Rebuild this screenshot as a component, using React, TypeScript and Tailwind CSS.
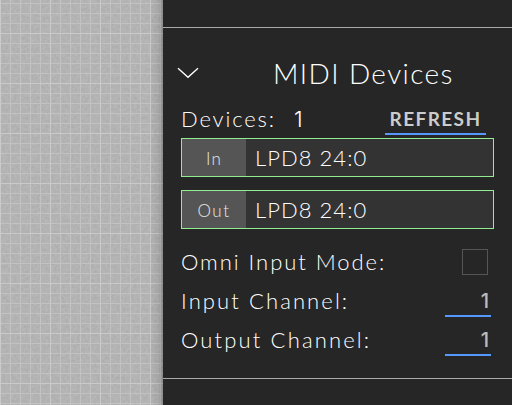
import type { ReactNode } from 'react';

function Canvas() {
  return (
    <div className="relative h-full w-[163px] shrink-0 bg-[#b7b7b7]">
      <svg className="block h-full w-full" width="163" height="405">
        <defs>
          <filter id="grain" x="0" y="0" width="100%" height="100%" colorInterpolationFilters="sRGB">
            <feTurbulence type="fractalNoise" baseFrequency="0.35" numOctaves="2" />
            <feColorMatrix values="0 0 0 0 0  0 0 0 0 0  0 0 0 0 0  0.1 0 0 0 -0.03" />
          </filter>
          <pattern id="minor" width="10" height="10" y="3" patternUnits="userSpaceOnUse">
            <path d="M0 0H10V1H1V10H0Z" fill="#c2c2c2" />
          </pattern>
          <pattern id="major" width="50" height="50" y="33" patternUnits="userSpaceOnUse">
            <path d="M0 0H50V1H1V50H0Z" fill="#cacaca" />
          </pattern>
          <linearGradient id="edge">
            <stop offset="0" stopColor="#000" stopOpacity="0" />
            <stop offset="0.7" stopColor="#000" stopOpacity="0.08" />
            <stop offset="1" stopColor="#000" stopOpacity="0.24" />
          </linearGradient>
        </defs>
        <rect width="163" height="405" filter="url(#grain)" />
        <rect width="163" height="405" fill="url(#minor)" />
        <rect width="163" height="405" fill="url(#major)" />
        <rect x="149" width="14" height="405" fill="url(#edge)" />
      </svg>
    </div>
  );
}

function Device({ label, tracking, children }: { label: string; tracking: string; children: ReactNode }) {
  return (
    <div className="flex h-[39px] w-[313px] border border-[#90ee90] bg-[#333]">
      <div className={`flex w-16 items-center justify-center bg-[#555] pt-[3px] text-[17px] text-[#e8e8e8] ${tracking}`}>{label}</div>
      <div className="flex items-center pl-[9px] text-[22px] tracking-[1.05px]">{children}</div>
    </div>
  );
}

function Channel({ label, tracking }: { label: string; tracking: string }) {
  return (
    <div className="flex h-[39px] w-[310px] justify-between">
      <span className={`leading-[38px] ${tracking}`}>{label}</span>
      <span className="mt-1 h-[31px] w-[46px] border-b-2 border-[#5599ff] pr-[2px] text-right font-['Inter',sans-serif] text-[20px] leading-[30px] font-medium text-[#bbb]">1</span>
    </div>
  );
}

export default function App() {
  return (
    <div className="flex h-[405px] w-[512px] overflow-hidden bg-[#262626]">
      <Canvas />
      <main className="flex flex-1 flex-col font-['Lato',sans-serif] text-[22px] font-light whitespace-nowrap text-white">
        <div className="h-7 shrink-0 border-b border-[#aaa]" />
        <section className="h-[351px] shrink-0 border-b border-[#aaa] pl-[18px]">
          <header className="flex h-[73px] items-center pt-4">
            <svg className="mt-px -ml-1 h-3 w-[22px]" viewBox="0 0 22 12" fill="none" stroke="#fff" strokeWidth="1.4">
              <path d="M1 1.2L11 10.2L21 1.2" />
            </svg>
            <h2 className="ml-[74px] text-[28px] leading-9 tracking-[1.4px]">MIDI Devices</h2>
          </header>
          <div className="flex h-[37px] w-[305px] justify-between">
            <div className="flex leading-[36px]">
              <span className="w-[113px] tracking-[1.85px]">Devices:</span>
              <span className="font-['Inter',sans-serif] font-light">1</span>
            </div>
            <button className="mt-1 h-[30px] w-[101px] border-b-2 border-[#5599ff] text-[19px] leading-[28px] font-bold tracking-[1.4px] text-[#ccc]">REFRESH</button>
          </div>
          <div className="flex flex-col gap-[13px]">
            <Device label="In" tracking="tracking-[1.2px]">LPD8 24:0</Device>
            <Device label="Out" tracking="tracking-[1.5px]">LPD8 24:0</Device>
          </div>
          <div className="mt-[14px] flex h-[39px] w-[307px] items-center justify-between pb-px">
            <span className="pb-0.5 tracking-[1.95px]">Omni Input Mode:</span>
            <span className="h-[26px] w-[26px] border border-[#555]" />
          </div>
          <Channel label="Input Channel:" tracking="tracking-[2.1px]" />
          <Channel label="Output Channel:" tracking="tracking-[2.15px]" />
        </section>
      </main>
    </div>
  );
}
